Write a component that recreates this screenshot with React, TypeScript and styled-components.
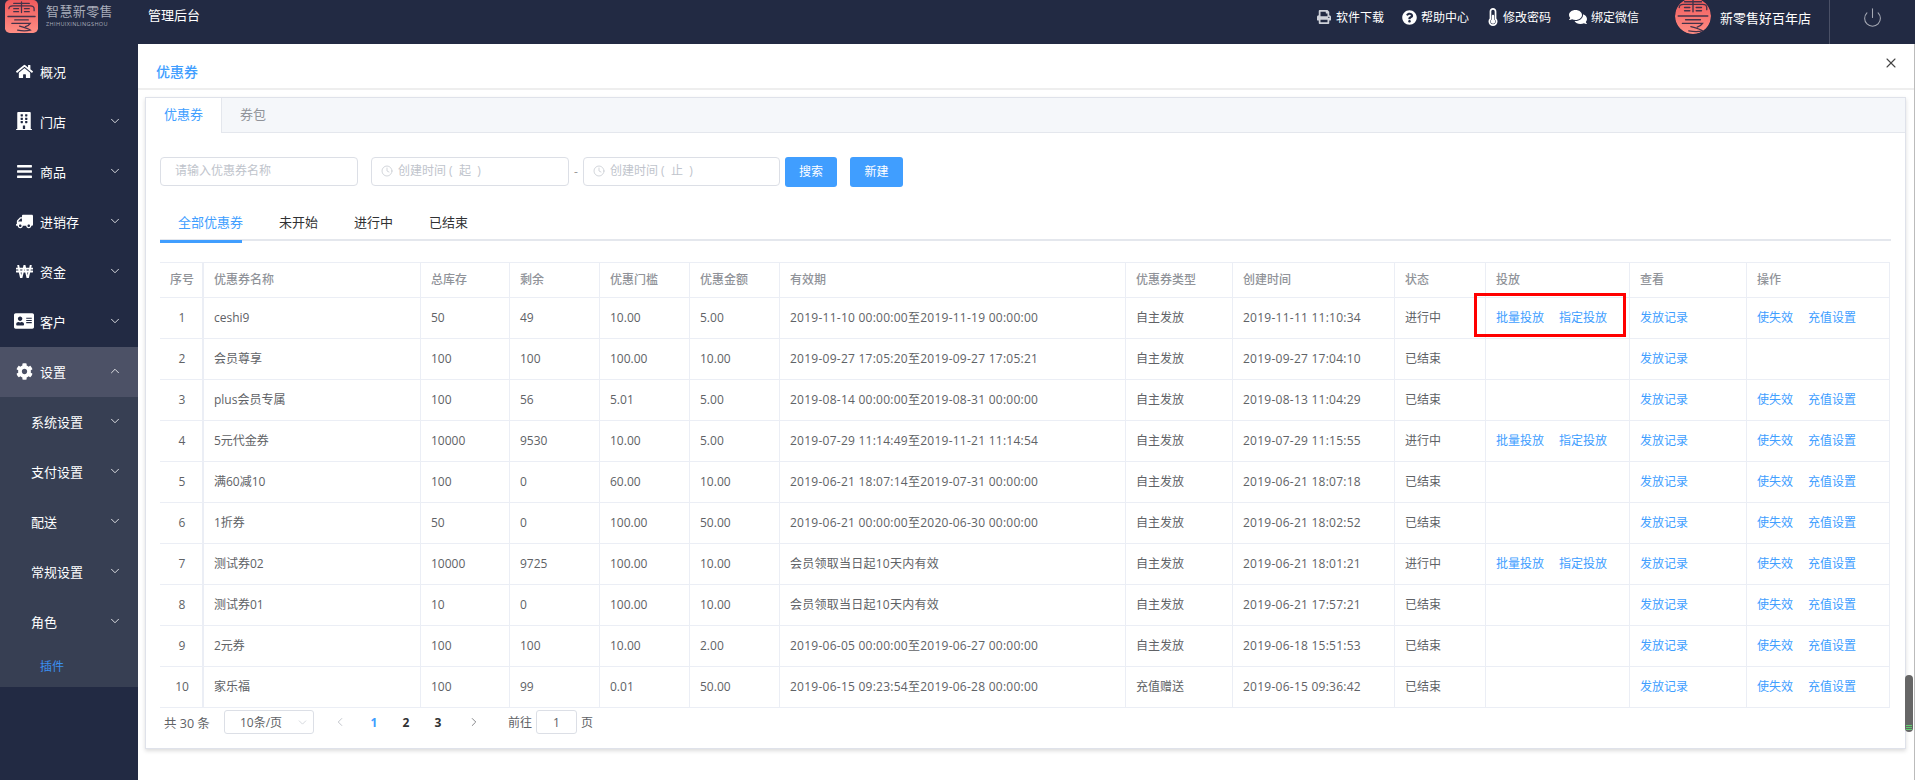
import React from 'react';
import styled, { createGlobalStyle } from 'styled-components';
import {
  FaHome,
  FaBuilding,
  FaBars,
  FaTruck,
  FaWonSign,
  FaAddressCard,
  FaCog,
  FaPrint,
  FaQuestionCircle,
  FaThermometerHalf,
  FaComments,
} from 'react-icons/fa';
import { ChevronDown, ChevronUp, ChevronLeft, ChevronRight, Clock, Power, X } from 'lucide-react';

const GlobalStyle = createGlobalStyle`
  html, body {
    margin: 0;
    padding: 0;
    height: 100%;
    overflow: hidden;
    background: #fff;
    font-family: "Open Sans", "Noto Sans CJK SC", sans-serif;
    font-size: 12px;
  }
  * { box-sizing: border-box; }
  input { font-family: inherit; }
`;

const Page = styled.div`
  width: 1915px;
  height: 780px;
  display: flex;
  flex-direction: column;
  overflow: hidden;
`;

const Header = styled.header`
  height: 44px;
  flex: none;
  background: #222a43;
  color: #fff;
  display: flex;
  align-items: stretch;
  overflow: hidden;
`;

const LogoWrap = styled.div`
  display: flex;
  padding-left: 5px;
  width: 148px;
  gap: 8px;
  flex: none;
`;

const LogoText = styled.div`
  display: flex;
  flex-direction: column;
  padding-top: 3px;
  color: #a9adba;
`;

const LogoName = styled.div`
  font-size: 13px;
  line-height: 17px;
  letter-spacing: 0.4px;
  white-space: nowrap;
`;

const LogoSub = styled.div`
  font-size: 5.6px;
  line-height: 8px;
  letter-spacing: 0.35px;
  white-space: nowrap;
`;

const AdminTitle = styled.div`
  font-size: 13px;
  line-height: 31px;
  flex: 1;
`;

const TopGroup = styled.div`
  display: flex;
  align-items: center;
  padding-bottom: 10px;
`;

const TopLink = styled.div<{ $gap: number; $mr?: number }>`
  display: flex;
  align-items: center;
  gap: ${p => p.$gap}px;
  margin-right: ${p => p.$mr ?? 18}px;
  font-size: 12px;
  white-space: nowrap;
`;

const Avatar = styled.div`
  width: 36px;
  height: 36px;
  margin: -2px 9px 0 18px;
  border-radius: 50%;
  overflow: hidden;
  flex: none;
`;

const StoreName = styled.div`
  font-size: 13px;
  margin-right: 18px;
  white-space: nowrap;
`;

const PowerBox = styled.div`
  width: 86px;
  border-left: 1px solid #4a5066;
  display: flex;
  align-items: center;
  justify-content: center;
  padding-bottom: 10px;
  color: #a6a9b4;
`;

const Body = styled.div`
  flex: 1;
  min-height: 0;
  display: flex;
`;

const Sidebar = styled.nav`
  width: 138px;
  flex: none;
  background: #222a43;
  padding-top: 3px;
`;

const MenuRow = styled.div<{ $active?: boolean; $sub?: boolean }>`
  height: 50px;
  display: flex;
  align-items: center;
  color: #fff;
  font-size: 13px;
  padding: 0 16px 2px ${p => (p.$sub ? '31px' : '12px')};
  background: ${p => (p.$active ? '#4c5166' : p.$sub ? '#373f53' : 'transparent')};
`;

const MenuIcon = styled.span`
  width: 24px;
  margin-right: 4px;
  display: flex;
  align-items: center;
  justify-content: center;
  flex: none;
`;

const MenuLabel = styled.span`
  flex: 1;
`;

const SubLeaf = styled.div`
  height: 40px;
  padding: 0 0 2px 40px;
  background: #373f53;
  color: #3b8ff0;
  font-size: 12px;
  display: flex;
  align-items: center;
`;

const Main = styled.main`
  position: relative;
  flex: 1;
  min-width: 0;
  background: #fff;
  border-right: 1px solid #bbb;
  display: flex;
  flex-direction: column;
`;

const TitleBar = styled.div`
  height: 46px;
  flex: none;
  border-bottom: 2px solid #eeeeee;
  display: flex;
  align-items: center;
  justify-content: space-between;
  padding: 9px 15px 0 18px;
  color: #409eff;
  font-size: 14px;
  font-weight: 500;
`;

const CloseBtn = styled.span`
  color: #444;
  display: flex;
  margin-top: -15px;
`;

const Content = styled.div`
  padding: 7px 8px 0 7px;
`;

const Card = styled.section`
  height: 652px;
  border: 1px solid #dfe2ea;
  background: #fff;
  box-shadow: 0 2px 4px rgba(0, 0, 0, 0.14);
`;

const CardTabs = styled.div`
  height: 35px;
  display: flex;
  background: #f5f7fa;
  border-bottom: 1px solid #e4e7ed;
`;

const CardTab = styled.div<{ $active?: boolean }>`
  height: 35px;
  font-size: 13px;
  display: flex;
  align-items: center;
  padding: 0 18px 4px;
  color: ${p => (p.$active ? '#409eff' : '#909399')};
  background: ${p => (p.$active ? '#fff' : 'transparent')};
  border-right: 1px solid ${p => (p.$active ? '#e4e7ed' : 'transparent')};
`;

const CardBody = styled.div`
  padding: 24px 14px 0 14px;
`;

const Filters = styled.div`
  display: flex;
  align-items: flex-start;
  height: 30px;
`;

const TextBox = styled.div<{ $w: number; $mr?: number }>`
  width: ${p => p.$w}px;
  height: 29px;
  margin-right: ${p => p.$mr ?? 0}px;
  border: 1px solid #dcdfe6;
  border-radius: 4px;
  display: flex;
  align-items: center;
  padding: 0 0 2px 14px;
  color: #c0c4cc;
  flex: none;
`;

const BoxInput = styled.input`
  border: 0;
  outline: 0;
  flex: 1;
  min-width: 0;
  padding: 0;
  font-size: 12px;
  background: transparent;

  &::placeholder {
    color: #c0c4cc;
    opacity: 1;
  }
`;

const DateBox = styled(TextBox)`
  padding-left: 9px;
  gap: 5px;
`;

const Dash = styled.span`
  width: 14px;
  line-height: 29px;
  text-align: center;
  color: #999;
  flex: none;
`;

const Button = styled.button<{ $ml: number }>`
  width: ${p => (p.$ml > 5 ? 53 : 52)}px;
  height: 30px;
  margin-left: ${p => p.$ml}px;
  border: 0;
  border-radius: 3px;
  background: #409eff;
  color: #fff;
  font-size: 12px;
  font-family: inherit;
  padding: 0 0 2px;
  flex: none;
`;

const StatusTabs = styled.div`
  margin-top: 20px;
  height: 34px;
  display: flex;
  border-bottom: 2px solid #e4e7ed;
`;

const StatusTab = styled.div<{ $active?: boolean }>`
  position: relative;
  height: 34px;
  font-size: 13px;
  line-height: 30px;
  margin-right: 36px;
  padding-left: ${p => (p.$active ? '18px' : '0')};
  color: ${p => (p.$active ? '#409eff' : '#303133')};

  ${p =>
    p.$active &&
    `&::after {
      content: '';
      position: absolute;
      left: 0;
      bottom: -2px;
      width: 82px;
      height: 3px;
      background: #409eff;
    }`}
`;

const Table = styled.table`
  margin-top: 21px;
  width: 1730px;
  table-layout: fixed;
  border-collapse: separate;
  border-spacing: 0;
  border-top: 1px solid #ebeef5;
  font-size: 12px;
`;

const Th = styled.th<{ $center?: boolean }>`
  height: 35px;
  padding: 0 0 2px ${p => (p.$center ? 2 : 10)}px;
  text-align: ${p => (p.$center ? 'center' : 'left')};
  color: #909399;
  font-weight: 500;
  border-right: 1px solid #ebeef5;
  border-bottom: 1px solid #ebeef5;

  &:first-child { border-right: 2px solid #ebeef5; }
`;

const Td = styled.td<{ $center?: boolean }>`
  height: 41px;
  padding: 0 0 2px ${p => (p.$center ? 2 : 10)}px;
  text-align: ${p => (p.$center ? 'center' : 'left')};
  color: #606266;
  border-right: 1px solid #ebeef5;
  border-bottom: 1px solid #ebeef5;
  white-space: nowrap;

  &:first-child { border-right: 2px solid #ebeef5; }
`;

const Stamp = styled.span`
  letter-spacing: 0.25px;
`;

const Link = styled.a`
  color: #409eff;
  margin-right: 15px;
`;

const Highlight = styled.div`
  position: absolute;
  left: 1336px;
  top: 249px;
  width: 152px;
  height: 44px;
  border: 3px solid #f00;
  pointer-events: none;
`;

const Pagination = styled.div`
  margin-top: 2px;
  height: 24px;
  display: flex;
  align-items: center;
  color: #606266;
  font-size: 12px;
`;

const Total = styled.span`
  padding-left: 4px;
  width: 64px;
  font-size: 12.5px;
  flex: none;
`;

const SizeSelect = styled.div`
  width: 90px;
  height: 24px;
  border: 1px solid #dcdfe6;
  border-radius: 3px;
  display: flex;
  align-items: center;
  justify-content: space-between;
  padding: 0 4px 0 15px;
  margin-right: 10px;
  flex: none;
`;

const PageCell = styled.span<{ $active?: boolean; $tone?: string; $ml?: number }>`
  width: 32px;
  height: 24px;
  margin-left: ${p => p.$ml ?? 0}px;
  display: flex;
  align-items: center;
  justify-content: center;
  font-weight: 700;
  color: ${p => (p.$active ? '#409eff' : p.$tone ?? '#303133')};
  flex: none;
`;

const PageJump = styled.span`
  margin-left: 18px;
  display: flex;
  align-items: center;
  gap: 4px;
`;

const JumpInput = styled.div`
  width: 41px;
  height: 24px;
  border: 1px solid #dcdfe6;
  border-radius: 3px;
  display: flex;
  align-items: center;
  justify-content: center;
`;

const Thumb = styled.div`
  position: absolute;
  right: 1px;
  top: 631px;
  width: 8px;
  height: 57px;
  border-radius: 4px;
  background: #666;
  display: flex;
  flex-direction: column;
  justify-content: flex-end;
  gap: 1px;
  padding: 0 1px 2px;
`;

const ThumbLine = styled.span`
  height: 1px;
  background: #5fce6f;
`;

const LogoMark = ({ size, radius, id }: { size: number; radius: number; id: string }) => (
  <svg width={size} height={size} viewBox="0 0 34 34" style={{ flex: 'none' }}>
    <defs>
      <linearGradient id={id} x1="0" y1="0" x2="0" y2="1">
        <stop offset="0" stopColor="#ef5a5c" />
        <stop offset="1" stopColor="#ff8d84" />
      </linearGradient>
    </defs>
    <rect width="34" height="34" rx={radius} fill={`url(#${id})`} />
    <g fill="none" stroke="#43334a" strokeWidth="1.3" strokeLinecap="round">
      <path d="M9 3.5 H25" />
      <path d="M17 2 V13" />
      <path d="M4 9 C4 6.5 6 6 8 6 H26 C28 6 30 6.5 30 9 V11" />
      <path d="M9 9 H14 M20 9 H25" />
      <path d="M9 12 H14 M20 12 H25" />
      <path d="M3 17 H31" />
      <path d="M10 20.5 H24" />
      <path d="M7 24 H26 C25 25.5 23 27 21 27.5" />
      <path d="M15 27 C19 28 23 29 26 31 C22 32 18 32 13 31" />
    </g>
  </svg>
);

const FlippedTruck = styled(FaTruck)`
  transform: scaleX(-1);
`;

const menu = [
  { label: '概况', icon: <FaHome size={17} /> },
  { label: '门店', icon: <FaBuilding size={18} />, arrow: true },
  { label: '商品', icon: <FaBars size={17} />, arrow: true },
  { label: '进销存', icon: <FlippedTruck size={17} />, arrow: true },
  { label: '资金', icon: <FaWonSign size={17} />, arrow: true },
  { label: '客户', icon: <FaAddressCard size={20} />, arrow: true },
];

const subMenu = ['系统设置', '支付设置', '配送', '常规设置', '角色'];

const columns = [
  { title: '序号', w: 44, center: true },
  { title: '优惠券名称', w: 217 },
  { title: '总库存', w: 89 },
  { title: '剩余', w: 90 },
  { title: '优惠门槛', w: 90 },
  { title: '优惠金额', w: 90 },
  { title: '有效期', w: 346 },
  { title: '优惠券类型', w: 107 },
  { title: '创建时间', w: 162 },
  { title: '状态', w: 91 },
  { title: '投放', w: 144 },
  { title: '查看', w: 117 },
  { title: '操作', w: 143 },
];

type Row = {
  name: string;
  stock: string;
  left: string;
  limit: string;
  amount: string;
  period: string;
  type: string;
  created: string;
  status: string;
  noOps?: boolean;
};

const rows: Row[] = [
  { name: 'ceshi9', stock: '50', left: '49', limit: '10.00', amount: '5.00', period: '2019-11-10 00:00:00至2019-11-19 00:00:00', type: '自主发放', created: '2019-11-11 11:10:34', status: '进行中' },
  { name: '会员尊享', stock: '100', left: '100', limit: '100.00', amount: '10.00', period: '2019-09-27 17:05:20至2019-09-27 17:05:21', type: '自主发放', created: '2019-09-27 17:04:10', status: '已结束', noOps: true },
  { name: 'plus会员专属', stock: '100', left: '56', limit: '5.01', amount: '5.00', period: '2019-08-14 00:00:00至2019-08-31 00:00:00', type: '自主发放', created: '2019-08-13 11:04:29', status: '已结束' },
  { name: '5元代金券', stock: '10000', left: '9530', limit: '10.00', amount: '5.00', period: '2019-07-29 11:14:49至2019-11-21 11:14:54', type: '自主发放', created: '2019-07-29 11:15:55', status: '进行中' },
  { name: '满60减10', stock: '100', left: '0', limit: '60.00', amount: '10.00', period: '2019-06-21 18:07:14至2019-07-31 00:00:00', type: '自主发放', created: '2019-06-21 18:07:18', status: '已结束' },
  { name: '1折券', stock: '50', left: '0', limit: '100.00', amount: '50.00', period: '2019-06-21 00:00:00至2020-06-30 00:00:00', type: '自主发放', created: '2019-06-21 18:02:52', status: '已结束' },
  { name: '测试券02', stock: '10000', left: '9725', limit: '100.00', amount: '10.00', period: '会员领取当日起10天内有效', type: '自主发放', created: '2019-06-21 18:01:21', status: '进行中' },
  { name: '测试券01', stock: '10', left: '0', limit: '100.00', amount: '10.00', period: '会员领取当日起10天内有效', type: '自主发放', created: '2019-06-21 17:57:21', status: '已结束' },
  { name: '2元券', stock: '100', left: '100', limit: '10.00', amount: '2.00', period: '2019-06-05 00:00:00至2019-06-27 00:00:00', type: '自主发放', created: '2019-06-18 15:51:53', status: '已结束' },
  { name: '家乐福', stock: '100', left: '99', limit: '0.01', amount: '50.00', period: '2019-06-15 09:23:54至2019-06-28 00:00:00', type: '充值赠送', created: '2019-06-15 09:36:42', status: '已结束' },
];

export default function App() {
  return (
    <Page>
      <GlobalStyle />
      <Header>
        <LogoWrap>
          <LogoMark size={33} radius={5} id="logo-a" />
          <LogoText>
            <LogoName>智慧新零售</LogoName>
            <LogoSub>ZHIHUIXINLINGSHOU</LogoSub>
          </LogoText>
        </LogoWrap>
        <AdminTitle>管理后台</AdminTitle>
        <TopGroup>
          <TopLink $gap={5}>
            <FaPrint size={14} color="#cfd2da" />
            软件下载
          </TopLink>
          <TopLink $gap={4} $mr={15}>
            <FaQuestionCircle size={15} />
            帮助中心
          </TopLink>
          <TopLink $gap={1}>
            <FaThermometerHalf size={18} />
            修改密码
          </TopLink>
          <TopLink $gap={4}>
            <FaComments size={18} />
            绑定微信
          </TopLink>
          <Avatar>
            <LogoMark size={36} radius={18} id="logo-b" />
          </Avatar>
          <StoreName>新零售好百年店</StoreName>
        </TopGroup>
        <PowerBox>
          <Power size={21} strokeWidth={1.2} />
        </PowerBox>
      </Header>
      <Body>
        <Sidebar>
          {menu.map(m => (
            <MenuRow key={m.label}>
              <MenuIcon>{m.icon}</MenuIcon>
              <MenuLabel>{m.label}</MenuLabel>
              {m.arrow && <ChevronDown size={14} strokeWidth={1.4} />}
            </MenuRow>
          ))}
          <MenuRow $active>
            <MenuIcon>
              <FaCog size={17} />
            </MenuIcon>
            <MenuLabel>设置</MenuLabel>
            <ChevronUp size={14} strokeWidth={1.4} />
          </MenuRow>
          {subMenu.map(s => (
            <MenuRow key={s} $sub>
              <MenuLabel>{s}</MenuLabel>
              <ChevronDown size={14} strokeWidth={1.4} />
            </MenuRow>
          ))}
          <SubLeaf>插件</SubLeaf>
        </Sidebar>
        <Main>
          <TitleBar>
            优惠券
            <CloseBtn>
              <X size={16} strokeWidth={1.6} />
            </CloseBtn>
          </TitleBar>
          <Content>
            <Card>
              <CardTabs>
                <CardTab $active>优惠券</CardTab>
                <CardTab>券包</CardTab>
              </CardTabs>
              <CardBody>
                <Filters>
                  <TextBox $w={198} $mr={13}>
                    <BoxInput placeholder="请输入优惠券名称" />
                  </TextBox>
                  <DateBox $w={198}>
                    <Clock size={12} strokeWidth={1.4} />
                    <BoxInput placeholder="创建时间 (  起  )" />
                  </DateBox>
                  <Dash>-</Dash>
                  <DateBox $w={197}>
                    <Clock size={12} strokeWidth={1.4} />
                    <BoxInput placeholder="创建时间 (  止  )" />
                  </DateBox>
                  <Button $ml={5}>搜索</Button>
                  <Button $ml={13}>新建</Button>
                </Filters>
                <StatusTabs>
                  <StatusTab $active>全部优惠券</StatusTab>
                  <StatusTab>未开始</StatusTab>
                  <StatusTab>进行中</StatusTab>
                  <StatusTab>已结束</StatusTab>
                </StatusTabs>
                <Table>
                  <colgroup>
                    {columns.map(c => (
                      <col key={c.title} width={c.w} />
                    ))}
                  </colgroup>
                  <thead>
                    <tr>
                      {columns.map(c => (
                        <Th key={c.title} $center={c.center}>
                          {c.title}
                        </Th>
                      ))}
                    </tr>
                  </thead>
                  <tbody>
                    {rows.map((r, i) => (
                      <tr key={r.name}>
                        <Td $center>{i + 1}</Td>
                        <Td>{r.name}</Td>
                        <Td>{r.stock}</Td>
                        <Td>{r.left}</Td>
                        <Td>{r.limit}</Td>
                        <Td>{r.amount}</Td>
                        <Td>
                          <Stamp>{r.period}</Stamp>
                        </Td>
                        <Td>{r.type}</Td>
                        <Td>
                          <Stamp>{r.created}</Stamp>
                        </Td>
                        <Td>{r.status}</Td>
                        <Td>
                          {r.status === '进行中' && (
                            <>
                              <Link>批量投放</Link>
                              <Link>指定投放</Link>
                            </>
                          )}
                        </Td>
                        <Td>
                          <Link>发放记录</Link>
                        </Td>
                        <Td>
                          {!r.noOps && (
                            <>
                              <Link>使失效</Link>
                              <Link>充值设置</Link>
                            </>
                          )}
                        </Td>
                      </tr>
                    ))}
                  </tbody>
                </Table>
                <Pagination>
                  <Total>共 30 条</Total>
                  <SizeSelect>
                    10条/页
                    <ChevronDown size={13} strokeWidth={1.2} color="#c0c4cc" />
                  </SizeSelect>
                  <PageCell $tone="#b0b4bc">
                    <ChevronLeft size={14} strokeWidth={1.3} />
                  </PageCell>
                  <PageCell $active $ml={2}>1</PageCell>
                  <PageCell>2</PageCell>
                  <PageCell>3</PageCell>
                  <PageCell $ml={4} $tone="#606266">
                    <ChevronRight size={14} strokeWidth={1.3} />
                  </PageCell>
                  <PageJump>
                    前往
                    <JumpInput>1</JumpInput>
                    页
                  </PageJump>
                </Pagination>
              </CardBody>
            </Card>
          </Content>
          <Highlight />
          <Thumb>
            <ThumbLine />
            <ThumbLine />
            <ThumbLine />
          </Thumb>
        </Main>
      </Body>
    </Page>
  );
}
